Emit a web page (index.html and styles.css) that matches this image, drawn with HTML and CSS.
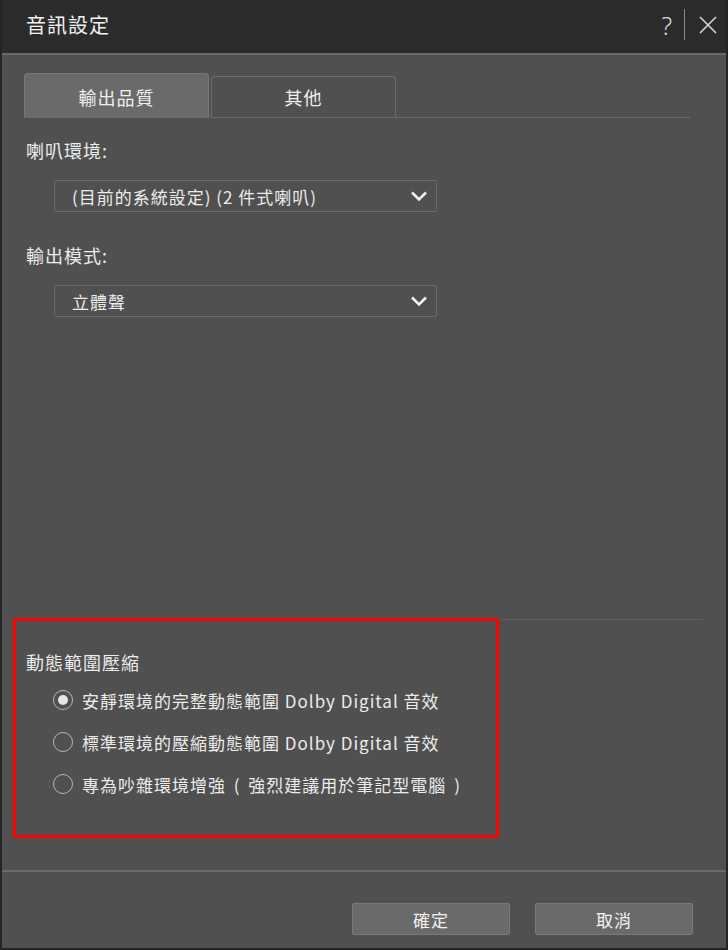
FILE: index.html
```html
<!DOCTYPE html>
<html lang="zh-Hant">
<head>
<meta charset="utf-8">
<link rel="stylesheet" href="styles.css">
</head>
<body>
<div class="window">
  <header class="titlebar">
    <div class="title">音訊設定</div>
    <div class="title-actions">
      <span class="help">?</span>
      <span class="vsep"></span>
      <svg class="close" width="20" height="20" viewBox="0 0 20 20"><path d="M2 2 L18 18 M18 2 L2 18" stroke="#d8d8d8" stroke-width="1.6" fill="none"/></svg>
    </div>
  </header>
  <main class="content">
    <div class="tabs">
      <div class="tab active">輸出品質</div>
      <div class="tab">其他</div>
      <div class="tab-rest"></div>
    </div>
    <div class="field-label first">喇叭環境:</div>
    <div class="select">
      <span>(目前的系統設定) (2 件式喇叭)</span>
      <svg class="chev" width="18" height="12" viewBox="0 0 18 12"><path d="M2 2.5 L9 9.5 L16 2.5" stroke="#f0f0f0" stroke-width="2.6" fill="none"/></svg>
    </div>
    <div class="field-label second">輸出模式:</div>
    <div class="select">
      <span>立體聲</span>
      <svg class="chev" width="18" height="12" viewBox="0 0 18 12"><path d="M2 2.5 L9 9.5 L16 2.5" stroke="#f0f0f0" stroke-width="2.6" fill="none"/></svg>
    </div>
    <div class="spacer"></div>
    <div class="divider"></div>
    <section class="drc">
      <div class="drc-title">動態範圍壓縮</div>
      <div class="radio-row"><span class="radio checked"></span><span>安靜環境的完整動態範圍 Dolby Digital 音效</span></div>
      <div class="radio-row"><span class="radio"></span><span>標準環境的壓縮動態範圍 Dolby Digital 音效</span></div>
      <div class="radio-row"><span class="radio"></span><span>專為吵雜環境增強 <span class="paren">(</span> 強烈建議用於筆記型電腦 <span class="paren">)</span></span></div>
    </section>
    <div class="highlight"></div>
  </main>
  <footer class="footer">
    <button class="btn">確定</button>
    <button class="btn">取消</button>
  </footer>
</div>
</body>
</html>
```
FILE: styles.css
```css
html, body {
  margin: 0;
  padding: 0;
  background: #1c1c1c;
}
body {
  font-family: "Noto Sans CJK TC", "Noto Sans", sans-serif;
  color: #ececec;
}
.window {
  width: 724px;
  height: 948px;
  border-left: 2px solid #242424;
  border-right: 2px solid #242424;
  border-bottom: 2px solid #242424;
  background: #505050;
  display: flex;
  flex-direction: column;
}
.titlebar {
  height: 53px;
  background: #2b2b2b;
  border-bottom: 2px solid #686868;
  display: flex;
  align-items: center;
  justify-content: space-between;
  padding: 0 8px 0 24px;
}
.title {
  font-size: 20px;
  letter-spacing: 1px;
  color: #f2f2f2;
  margin-top: -4px;
}
.title-actions {
  display: flex;
  align-items: center;
  margin-top: -4px;
}
.help {
  font-family: "Noto Sans", sans-serif;
  font-size: 25px;
  font-weight: 300;
  color: #d8d8d8;
  line-height: 30px;
}
.vsep {
  width: 1px;
  height: 31px;
  background: #8a8a8a;
  margin: 0 13px 0 12px;
}
.close { display: block; }
.content {
  position: relative;
  flex: 1;
  display: flex;
  flex-direction: column;
  padding: 18px 22px 0 22px;
}
.tabs {
  display: flex;
  align-items: flex-end;
  height: 45px;
}
.tab {
  width: 185px;
  height: 42px;
  box-sizing: border-box;
  border: 1px solid #6c6c6c;
  border-bottom: 1px solid #686868;
  border-radius: 4px 4px 0 0;
  font-size: 18px;
  letter-spacing: 1px;
  display: flex;
  align-items: center;
  justify-content: center;
  color: #f0f0f0;
  margin-right: 2px;
}
.tab.active {
  height: 45px;
  background: #6a6a6a;
  border-color: #787878;
  border-bottom-color: #6a6a6a;
  padding-top: 2px;
}
.tab-rest {
  flex: 1;
  margin-right: 14px;
  border-bottom: 1px solid #686868;
  margin-left: -2px;
}
.field-label {
  font-size: 18px;
  letter-spacing: 1px;
  line-height: 24px;
  margin-left: 2px;
}
.field-label.first { margin-top: 20px; }
.field-label.second { margin-top: 31px; }
.select {
  margin: 18px 0 0 30px;
  width: 383px;
  height: 32px;
  box-sizing: border-box;
  border: 1px solid #6a6a6a;
  border-radius: 2px;
  display: flex;
  align-items: center;
  justify-content: space-between;
  padding: 0 8px 0 17px;
  font-size: 17px;
  letter-spacing: 1px;
}
.chev { display: block; }
.spacer { flex: 1; }
.divider {
  height: 1px;
  background: #5e5e5e;
  margin-right: 2px;
}
.drc {
  height: 250px;
  padding-top: 30px;
  box-sizing: border-box;
  margin-left: 2px;
}
.drc-title {
  font-size: 18px;
  letter-spacing: 1px;
  line-height: 24px;
  margin-bottom: 5px;
}
.radio-row {
  display: flex;
  align-items: center;
  height: 42px;
  font-size: 17px;
  letter-spacing: 1px;
  margin-left: 27px;
}
.paren {
  padding: 0 3px;
}
.radio {
  width: 18px;
  height: 18px;
  border: 1.5px solid #b8b8b8;
  border-radius: 50%;
  margin-right: 9px;
  position: relative;
}
.radio.checked::after {
  content: "";
  position: absolute;
  left: 4px;
  top: 4px;
  width: 10px;
  height: 10px;
  border-radius: 50%;
  background: #e6e6e6;
}
.highlight {
  position: absolute;
  left: 11px;
  top: 563px;
  width: 480px;
  height: 214px;
  border: 3px solid #ff0000;
  pointer-events: none;
}
.footer {
  height: 78px;
  border-top: 2px solid #6a6a6a;
  display: flex;
  justify-content: flex-end;
  align-items: flex-start;
  gap: 25px;
  padding: 31px 33px 0 0;
  box-sizing: border-box;
}
.btn {
  width: 158px;
  height: 32px;
  background: #6a6a6a;
  border: 1px solid #7a7a7a;
  border-radius: 2px;
  color: #f2f2f2;
  font-family: "Noto Sans CJK TC", sans-serif;
  font-size: 17px;
  letter-spacing: 1px;
  padding: 0;
}
```
